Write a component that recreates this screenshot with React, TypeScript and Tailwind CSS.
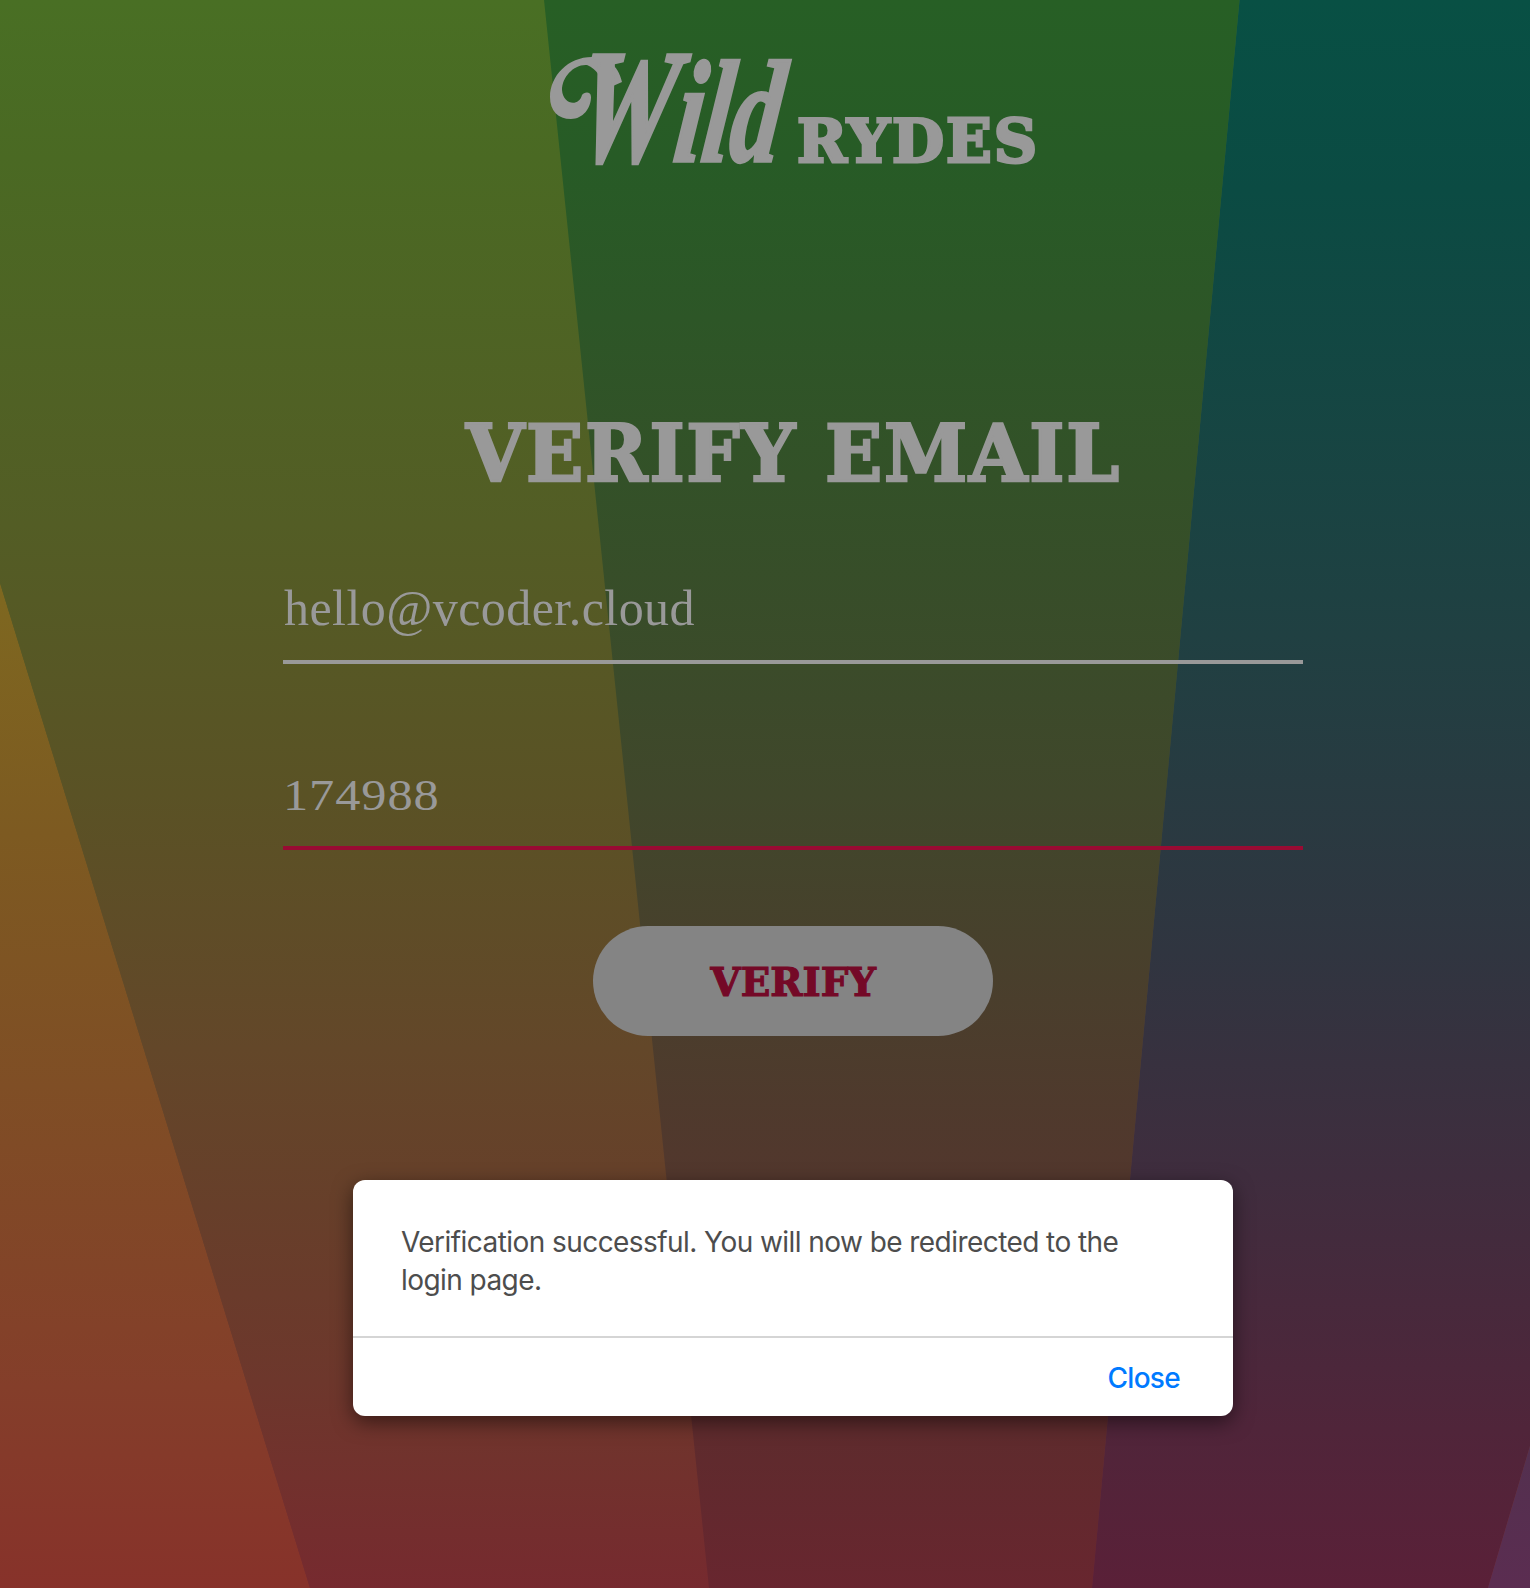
import React from "react";

const stripes = [
  {
    id: "gold",
    points: "0,583 310,1588 0,1588",
    y1: 583,
    stops: [
      [0, "#7e6820"],
      [0.25, "#7d5a21"],
      [0.5, "#7f4e25"],
      [0.8, "#843e2a"],
      [1, "#87322a"],
    ],
  },
  {
    id: "olive",
    points: "0,0 544,0 709,1588 310,1588 0,583",
    y1: 0,
    stops: [
      [0, "#496f24"],
      [0.1, "#4a6923"],
      [0.33, "#535d25"],
      [0.5, "#5a5225"],
      [0.66, "#634729"],
      [0.76, "#673f2a"],
      [0.87, "#6d372c"],
      [0.93, "#72312d"],
      [1, "#762a2f"],
    ],
  },
  {
    id: "green",
    points: "544,0 1239.5,0 1092,1588 709,1588",
    y1: 0,
    stops: [
      [0, "#275f25"],
      [0.1, "#275b26"],
      [0.3, "#335128"],
      [0.5, "#40472b"],
      [0.6, "#48402c"],
      [0.74, "#52372d"],
      [0.9, "#5e2b2d"],
      [1, "#68262f"],
    ],
  },
  {
    id: "teal",
    points: "1239.5,0 1530,0 1530,1446 1488,1588 1092,1588",
    y1: 0,
    stops: [
      [0, "#085044"],
      [0.12, "#0b4b43"],
      [0.4, "#204042"],
      [0.6, "#303540"],
      [0.74, "#3f2d3e"],
      [0.9, "#50253a"],
      [1, "#5a2038"],
    ],
  },
  {
    id: "violet",
    points: "1530,1446 1530,1588 1488,1588",
    y1: 1446,
    stops: [
      [0, "#53304f"],
      [1, "#5b2d51"],
    ],
  },
] as const;

function Rainbow() {
  return (
    <svg className="absolute inset-0 h-full w-full" viewBox="0 0 1530 1588" preserveAspectRatio="none" aria-hidden="true">
      <defs>
        {stripes.map((s) => (
          <linearGradient key={s.id} id={s.id} gradientUnits="userSpaceOnUse" x1="0" y1={s.y1} x2="0" y2="1588">
            {s.stops.map(([offset, color]) => (
              <stop key={offset} offset={offset} stopColor={color} />
            ))}
          </linearGradient>
        ))}
      </defs>
      <rect width="1530" height="1588" fill="url(#olive)" />
      {stripes.map((s) => (
        <polygon key={s.id} points={s.points} fill={`url(#${s.id})`} />
      ))}
    </svg>
  );
}

function Logo() {
  return (
    <svg
      className="mt-[50px] h-[116px] w-[488px] shrink-0 overflow-visible"
      viewBox="0 0 488 116"
      role="img"
      aria-label="Wild Rydes"
    >
      {/* swash leading into the W */}
      <path
        d="M73 32 C69 14 57 7 43 7 C19 7 1 26 1 47 C1 61 9 69 22 69 C34 69 42 58 42 47 C42 41 35 42 33 45 C30 57 14 55 13 40 C13 27 25 14 38 15 C48 19 53 28 55 40 Z"
        fill="#999999"
      />
      <text
        transform="translate(23 111) skewX(-7) scale(0.69 1)"
        fill="#999999"
        stroke="#999999"
        strokeWidth="3.5"
        fontFamily="'Liberation Serif', serif"
        fontStyle="italic"
        fontWeight="700"
        fontSize="145"
      >
        <tspan fontSize="162">W</tspan>ild
      </text>
      <text
        x="248"
        y="112"
        textLength="240"
        lengthAdjust="spacing"
        fill="#999999"
        stroke="#999999"
        strokeWidth="3"
        fontFamily="'DejaVu Serif', serif"
        fontWeight="700"
        fontSize="60"
      >
        RYDES
      </text>
    </svg>
  );
}

export default function App() {
  return (
    <div className="relative flex h-[1588px] w-[1530px] flex-col overflow-hidden">
      <Rainbow />
      <main className="relative flex flex-col items-center pl-[56px]">
        <Logo />
        <h1 className="mt-[209px] h-[156px] origin-center scale-x-[0.965] whitespace-nowrap text-center font-['DejaVu_Serif',serif] text-[78px] font-bold leading-[157px] tracking-[1.8px] text-[#999999] [-webkit-text-stroke:2.5px_#999999]">
          VERIFY EMAIL
        </h1>
        <form className="flex w-[1020px] flex-col items-center" onSubmit={(e) => e.preventDefault()}>
          <input
            className="mt-[29px] h-[104px] w-full border-b-4 border-[#999999] bg-transparent pb-[4px] pl-[1px] font-['Liberation_Serif',serif] text-[50px] tracking-[0.45px] text-[#999999] outline-none"
            defaultValue="hello@vcoder.cloud"
          />
          <div className="mt-[82px] h-[104px] w-full border-b-4 border-[#990b33]">
            <input
              className="h-[100px] w-[800px] origin-left scale-x-[1.12] bg-transparent pb-[2px] font-['Liberation_Serif',serif] text-[45px] tracking-[0.8px] text-[#999999] outline-none"
              defaultValue="174988"
            />
          </div>
          <button className="mt-[76px] h-[110px] w-[400px] rounded-full bg-[#848484] pt-px font-['DejaVu_Serif',serif] text-[40px] font-bold text-[#740927] [-webkit-text-stroke:1.2px_#740927]">
            <span className="inline-block scale-x-[0.97]">VERIFY</span>
          </button>
        </form>
        <div
          role="dialog"
          className="mt-[144px] flex h-[236px] w-[880px] flex-col rounded-xl bg-white font-['Inter',sans-serif] text-[28px] shadow-[0_6px_20px_rgba(0,0,0,0.5)]"
        >
          <p className="h-[156px] whitespace-nowrap pl-[48px] pt-[43px] leading-[38px] tracking-[-0.56px] text-[#4d4d4d]">
            Verification successful. You will now be redirected to the
            <br />
            login page.
          </p>
          <div className="flex h-[80px] items-center justify-end border-t-2 border-[#d5d5d5] pr-[53px] pt-[2px]">
            <button className="font-medium tracking-[-0.7px] text-[#007aff]">Close</button>
          </div>
        </div>
      </main>
    </div>
  );
}
